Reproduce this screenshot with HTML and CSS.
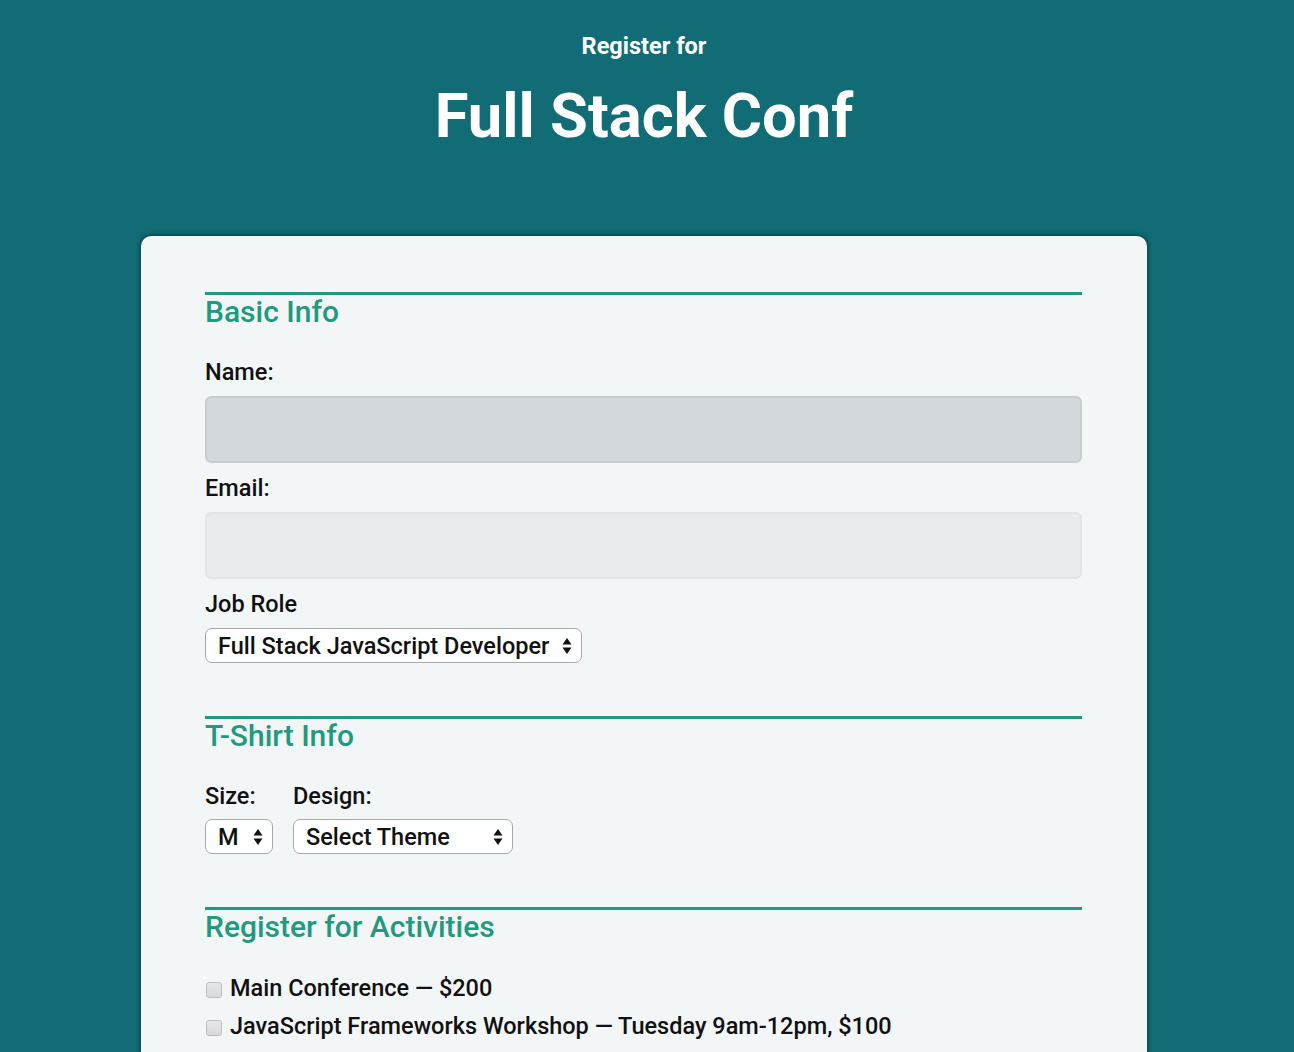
FILE: index.html
```html
<!DOCTYPE html>
<html lang="en">
<head>
<meta charset="utf-8">
<title>Register for Full Stack Conf</title>
<link rel="stylesheet" href="styles.css">
</head>
<body>
<header class="page-header">
  <p class="kicker">Register for</p>
  <h1 class="title">Full Stack Conf</h1>
</header>
<main class="card">
  <form class="form">
    <section class="section">
      <h2 class="section-title">Basic Info</h2>
      <label class="label" for="name">Name:</label>
      <input class="text-input focused" id="name" type="text">
      <label class="label" for="mail">Email:</label>
      <input class="text-input" id="mail" type="email">
      <label class="label" for="title">Job Role</label>
      <div class="select-row">
        <select class="select" id="title"><option>Full Stack JavaScript Developer</option></select>
      </div>
    </section>
    <section class="section">
      <h2 class="section-title">T-Shirt Info</h2>
      <div class="shirt-row">
        <div class="shirt-col">
          <label class="label" for="size">Size:</label>
          <select class="select select-size" id="size"><option>M</option></select>
        </div>
        <div class="shirt-col">
          <label class="label" for="design">Design:</label>
          <select class="select select-design" id="design"><option>Select Theme</option></select>
        </div>
      </div>
    </section>
    <section class="section">
      <h2 class="section-title">Register for Activities</h2>
      <div class="activities">
        <label class="activity"><input class="check" type="checkbox"> Main Conference — $200</label>
        <label class="activity"><input class="check" type="checkbox"> JavaScript Frameworks Workshop — Tuesday 9am-12pm, $100</label>
        <label class="activity"><input class="check" type="checkbox"> JavaScript Libraries Workshop — Tuesday 1pm-4pm, $100</label>
      </div>
    </section>
  </form>
</main>
</body>
</html>
```

FILE: styles.css
```css
* { box-sizing: border-box; }
html, body { margin: 0; padding: 0; }
body {
  background: #116c75;
  font-family: Roboto, "Liberation Sans", Arial, sans-serif;
  color: #111;
  overflow: hidden;
  height: 1052px;
}
.page-header {
  text-align: center;
  color: #fff;
  padding-top: 33px;
  padding-right: 6px;
  height: 236px;
}
.kicker {
  margin: 0;
  font-size: 23.5px;
  font-weight: 700;
  line-height: 26px;
}
.title {
  margin: 22px 0 0;
  font-size: 61.5px;
  font-weight: 700;
  line-height: 70px;
}
.card {
  width: 1006px;
  margin: 0 0 0 calc(50% - 506px);
  background: #f3f6f7;
  border-radius: 10px 10px 0 0;
  box-shadow: 0 0 4px 1px rgba(0, 0, 0, 0.45);
  padding: 56px 65px 60px 64px;
  min-height: 900px;
}
.form { display: flex; flex-direction: column; }
.section { display: flex; flex-direction: column; margin-bottom: 53px; }
.section-title {
  margin: 0;
  border-top: 3px solid #1f9a7f;
  color: #1f9a7f;
  font-size: 30px;
  font-weight: 500;
  line-height: 34px;
}
.label {
  display: block;
  font-size: 23.5px;
  font-weight: 500;
  line-height: 26px;
  margin-top: 30px;
  margin-bottom: 11px;
}
.text-input + .label { margin-top: 12px; }
.text-input {
  display: block;
  width: 100%;
  height: 67px;
  border: 2px solid #e0e5e7;
  border-radius: 6px;
  background: #e8ecee;
  font: inherit;
}
.text-input.focused {
  background: #d2d8db;
  border-color: #c6cdd1;
}
.select-row { display: flex; }
.select {
  appearance: none;
  -webkit-appearance: none;
  height: 35px;
  border: 1px solid #a8a8a8;
  border-radius: 7px;
  background-color: #fff;
  background-image: url("data:image/svg+xml;utf8,<svg xmlns='http://www.w3.org/2000/svg' width='10' height='18' viewBox='0 0 10 18'><path d='M5 1 L9.5 7.5 H0.5 Z M5 17 L9.5 10.5 H0.5 Z' fill='%23111'/></svg>");
  background-repeat: no-repeat;
  background-position: right 9px center;
  background-size: 10px 18px;
  font-family: Roboto, "Liberation Sans", Arial, sans-serif;
  font-size: 23.5px;
  font-weight: 500;
  color: #111;
  padding: 0 26px 0 12px;
  width: 377px;
}
.shirt-row { display: flex; gap: 20px; }
.shirt-col { display: flex; flex-direction: column; }
.shirt-col .label { margin-top: 30px; margin-bottom: 10px; }
.select-size { width: 68px; }
.select-design { width: 220px; }
.activities { display: flex; flex-direction: column; margin-top: 30px; gap: 10px; }
.activity {
  display: flex;
  align-items: center;
  font-size: 23.5px;
  font-weight: 500;
  line-height: 28px;
}
.check {
  appearance: none;
  -webkit-appearance: none;
  width: 16px;
  height: 16px;
  margin: 4px 8px 0 1px;
  border: 1px solid #bdbdbd;
  border-radius: 3px;
  background: linear-gradient(#e8e8e8, #d8d8d8);
  flex: none;
}
```
